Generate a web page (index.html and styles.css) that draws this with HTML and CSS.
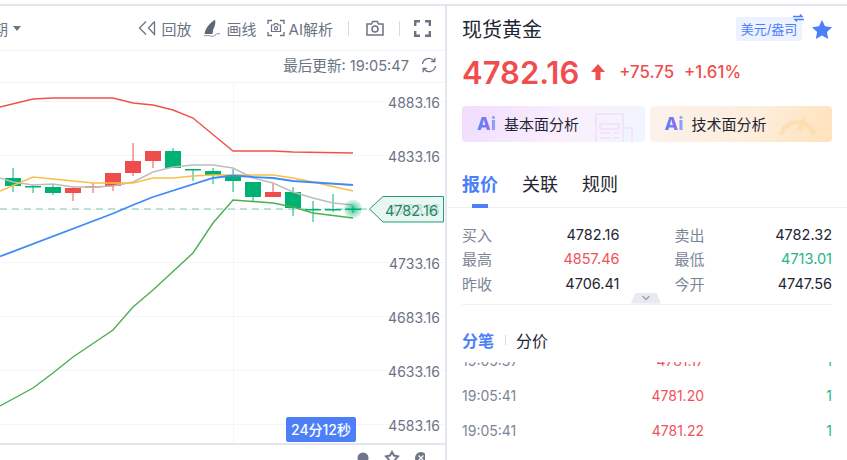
FILE: index.html
```html
<!DOCTYPE html>
<html lang="zh-CN">
<head>
    <meta charset="UTF-8">
    <meta name="viewport" content="width=device-width, initial-scale=1.0">
    <title>现货黄金</title>
    <link rel="stylesheet" href="styles.css">
</head>
<body>
    <div class="page">
        <section class="chart-panel">
            <div class="toolbar">
                <div class="period">期 <span class="caret"></span></div>
                <div class="tools">
                    <div class="tool tool-replay">
                        <svg width="18" height="16" viewBox="0 0 18 16" class="icon"><path d="M8 1.500 1.500 8 8 14.500M16.500 1.500 10.500 8l6 6.500V1.500" fill="none" stroke="#6b7484" stroke-width="1.300"/></svg>
                        回放
                    </div>
                    <div class="tool tool-draw">
                        <svg width="18" height="18" viewBox="0 0 18 18" class="icon"><path d="M12 .5c1 3.500-.2 7-1.800 10L9.500 15H1.500l1-4C4.500 7 8 3 12 .5Z" fill="#5f6879"/><path d="M1 17c3-.6 5-.8 7 .2 2 .5 3.500-.5 5.500-2.200l3.500-.5" fill="none" stroke="#8b93a3" stroke-width="1"/></svg>
                        画线
                    </div>
                    <div class="tool tool-ai">
                        <svg width="18" height="18" viewBox="0 0 18 18" class="icon"><path d="M1 5V1.500h4M13 1.500h4V5M17 13v3.500h-4M5 16.500H1V13" fill="none" stroke="#6b7484" stroke-width="1.400"/><path d="M4.500 6H7l.8-1.300h2.400L11 6h2.500v6.500h-9Z" fill="none" stroke="#6b7484" stroke-width="1.200"/><circle cx="9" cy="9.200" r="1.600" fill="none" stroke="#6b7484" stroke-width="1.200"/></svg>
                        AI解析
                    </div>
                    <span class="tool-sep"></span>
                    <svg class="camera" width="18" height="16" viewBox="0 0 18 16"><path d="M1 4h4.500l1.200-2.500h4.600L12.500 4H17v11H1Z" fill="none" stroke="#6b7484" stroke-width="1.500"/><circle cx="9" cy="9" r="3" fill="none" stroke="#6b7484" stroke-width="1.500"/></svg>
                    <span class="tool-sep"></span>
                    <svg width="17" height="17" viewBox="0 0 17 17"><path d="M1.200 6V1.200H6M11 1.200h4.800V6M15.800 11v4.800H11M6 15.800H1.200V11" fill="none" stroke="#6b7484" stroke-width="2.400"/></svg>
                </div>
            </div>
            <div class="status">
                <span>最后更新: 19:05:47</span>
                <svg width="16" height="16" viewBox="0 0 16 16"><path d="M1.500 7A6.500 6.500 0 0 1 13 3.800M14.500 9A6.500 6.500 0 0 1 3 12.200" fill="none" stroke="#6b7484" stroke-width="1.300"/><path d="M13.800 .8v3.700H10.200M2.200 15.200v-3.700h3.600" fill="none" stroke="#6b7484" stroke-width="1.300"/></svg>
            </div>
            <div class="chart">
                <svg class="chart-svg" width="445" height="360" viewBox="0 83 445 360">
                    <defs>
                        <radialGradient id="glow">
                            <stop offset="0" stop-color="#00b272" stop-opacity=".75"/>
                            <stop offset="1" stop-color="#00b272" stop-opacity=".08"/>
                        </radialGradient>
                    </defs>

                    <g class="grid">
                        <path d="M0 101.500H445M0 155.500H445M0 209.500H445M0 262.500H445M0 316.500H445M0 370.500H445M0 424.500H445M233.500 83V443"/>
                    </g>

                    <line class="last-price" x1="0" y1="209" x2="368" y2="209"/>

                    <g class="wick up">
                        <rect x="72.300" y="187" width="1.500" height="14"/>
                        <rect x="92.300" y="183" width="1.500" height="10"/>
                        <rect x="112.300" y="173" width="1.500" height="18"/>
                        <rect x="132.300" y="143" width="1.500" height="33"/>
                        <rect x="152.300" y="151" width="1.500" height="17"/>
                        <rect x="272.300" y="183" width="1.500" height="14"/>
                    </g>
                    <g class="wick down">
                        <rect x="12.300" y="168" width="1.500" height="24"/>
                        <rect x="32.300" y="185" width="1.500" height="8"/>
                        <rect x="52.300" y="185" width="1.500" height="10"/>
                        <rect x="172.300" y="148" width="1.500" height="20"/>
                        <rect x="192.300" y="169" width="1.500" height="12"/>
                        <rect x="212.300" y="168" width="1.500" height="16"/>
                        <rect x="232.300" y="169" width="1.500" height="23"/>
                        <rect x="252.300" y="182" width="1.500" height="19"/>
                        <rect x="292.300" y="187" width="1.500" height="29"/>
                        <rect x="312.300" y="201" width="1.500" height="21"/>
                        <rect x="332.300" y="194" width="1.500" height="18"/>
                        <rect x="352.300" y="206" width="1.500" height="7"/>
                    </g>
                    <g class="up">
                        <rect x="65" y="188" width="16" height="5"/>
                        <rect x="85" y="186" width="16" height="1.500"/>
                        <rect x="105" y="173" width="16" height="13"/>
                        <rect x="125" y="161" width="16" height="12"/>
                        <rect x="145" y="151" width="16" height="10"/>
                        <rect x="265" y="192" width="16" height="5"/>
                    </g>
                    <g class="down">
                        <rect x="5" y="178" width="16" height="8"/>
                        <rect x="25" y="186" width="16" height="1.500"/>
                        <rect x="45" y="187" width="16" height="6"/>
                        <rect x="165" y="151" width="16" height="17"/>
                        <rect x="185" y="169" width="16" height="1.500"/>
                        <rect x="205" y="171" width="16" height="4"/>
                        <rect x="225" y="175" width="16" height="6"/>
                        <rect x="245" y="182" width="16" height="15"/>
                        <rect x="285" y="192" width="16" height="16"/>
                        <rect x="305" y="209" width="16" height="1.500"/>
                        <rect x="325" y="209" width="16" height="1.500"/>
                        <rect x="345" y="208.500" width="16" height="1.500"/>
                    </g>

                    <polyline class="line line-red" points="0,107 33,99 53,98 113,98 133,103 153,105 173,110 193,118 233,151 273,151 293,152 353,153"/>
                    <polyline class="line line-green" points="0,406 33,388 53,373 73,357 113,330 133,307 153,290 193,253 213,223 233,200 273,203 293,207 313,213 353,218"/>
                    <polyline class="line line-grey" points="0,178 13,182 33,185 53,184 73,187 93,187 113,186 133,182 153,172 173,167 193,165 213,165 233,168 253,178 273,183 293,192 313,198 333,203 353,205"/>
                    <polyline class="line line-yellow" points="0,191 33,177 53,179 73,181 93,183 113,183 133,183 153,178 173,178 193,176 213,175 233,175 273,175 293,178 313,182 353,191"/>
                    <polyline class="line line-blue" points="0,256.500 113,213.500 133,205 153,197 213,178 233,175.500 253,177 273,178 293,181 353,185"/>

                    <circle cx="353" cy="209" r="9.500" fill="url(#glow)"/>

                    <g class="axis">
                        <text x="440" y="108">4883.16</text>
                        <text x="440" y="162">4833.16</text>
                        <text x="440" y="269">4733.16</text>
                        <text x="440" y="323">4683.16</text>
                        <text x="440" y="377">4633.16</text>
                        <text x="440" y="431">4583.16</text>
                    </g>

                    <polygon class="price-tag" points="369.500,209 383,196.500 443.500,196.500 443.500,222 383,222"/>
                    <text class="price-ghost" x="440" y="215">4783.16</text>
                    <text class="price-tag-text" x="385" y="216">4782.16</text>
                </svg>
                <div class="countdown">24分12秒</div>
            </div>
            <div class="chart-foot">
                <svg width="70" height="16" viewBox="0 0 70 16">
                    <circle cx="8" cy="8" r="5.500" fill="#6e7688"/>
                    <path d="M37 2l2 3.500 4 .8-2.700 3 .4 4-3.700-1.700-3.700 1.700.4-4-2.700-3 4-.8Z" fill="none" stroke="#6e7688" stroke-width="2"/>
                    <circle cx="66" cy="8" r="6" fill="#6e7688"/>
                    <path d="M63.500 5.500l5 5M68.500 5.500l-5 5" stroke="#fff" stroke-width="1.200"/>
                </svg>
            </div>
        </section>

        <section class="side-panel">
            <div class="head">
                <h1 class="title">现货黄金</h1>
                <div class="head-right">
                    <div class="currency">
                        美元/盎司
                        <svg class="swap" width="11" height="8" viewBox="0 0 11 8"><path d="M0 2.500h9L7 .5M11 5.500H2l2 2" fill="none" stroke="#4d7ffa" stroke-width="1.400"/></svg>
                    </div>
                    <svg width="20" height="19" viewBox="0 0 20 19"><path d="M10 0l3 6.300 7 .9-5.100 4.800 1.300 6.900L10 15.500 3.800 18.900 5.100 12 0 7.200l7-.9Z" fill="#4b80f8"/></svg>
                </div>
            </div>

            <div class="quote">
                <span class="price">4782.16</span>
                <svg class="arrow" width="14" height="16" viewBox="0 0 14 16"><path d="M7 0l7 8H9.500v8h-5V8H0Z" fill="#f04e4e"/></svg>
                <span class="change">+75.75</span>
                <span class="change">+1.61%</span>
            </div>

            <div class="analysis">
                <div class="analysis-btn basic">
                    <span class="ai-logo">Ai</span>
                    基本面分析
                    <svg class="decor decor-doc" width="38" height="29" viewBox="0 0 38 29"><path d="M1 29V1h27v28M5 11h19v5H5ZM5 20h10M18 20h6M5 25h10M18 25h6M28 15h9v14" fill="none" stroke="#f3d9f5" stroke-width="2"/></svg>
                </div>
                <div class="analysis-btn tech">
                    <span class="ai-logo">Ai</span>
                    技术面分析
                    <svg class="decor decor-gauge" width="39" height="24" viewBox="0 0 39 24"><path d="M3 23a17 17 0 0 1 33 0" fill="none" stroke="#fdd9a6" stroke-width="5"/><path d="M18 18 28 1l-3 19Z" fill="#fdd9a6"/></svg>
                </div>
            </div>

            <div class="tabs">
                <span class="tab active">报价</span>
                <span class="tab">关联</span>
                <span class="tab">规则</span>
            </div>

            <div class="stats">
                <div class="stat"><span class="stat-label">买入</span><span>4782.16</span></div>
                <div class="stat"><span class="stat-label">卖出</span><span>4782.32</span></div>
                <div class="stat"><span class="stat-label">最高</span><span class="red">4857.46</span></div>
                <div class="stat"><span class="stat-label">最低</span><span class="green">4713.01</span></div>
                <div class="stat"><span class="stat-label">昨收</span><span>4706.41</span></div>
                <div class="stat"><span class="stat-label">今开</span><span>4747.56</span></div>
                <div class="collapse">
                    <svg width="10" height="6" viewBox="0 0 10 6"><path d="M1.500 1 5 4.500 8.500 1" fill="none" stroke="#9aa1af" stroke-width="1.300"/></svg>
                </div>
            </div>

            <div class="subtabs">
                <span class="subtab active">分笔</span>
                <span class="subtab-sep"></span>
                <span class="subtab">分价</span>
            </div>

            <div class="ticks">
                <div class="tick-list">
                    <div class="tick"><span class="time">19:05:37</span><span class="red">4781.17</span><span class="green">1</span></div>
                    <div class="tick"><span class="time">19:05:41</span><span class="red">4781.20</span><span class="green">1</span></div>
                    <div class="tick"><span class="time">19:05:41</span><span class="red">4781.22</span><span class="green">1</span></div>
                    <div class="tick"><span class="time">19:05:41</span><span class="red">4781.22</span><span class="green">1</span></div>
                </div>
            </div>
        </section>
    </div>
</body>
</html>
```
FILE: styles.css
```css
* {
    box-sizing: border-box;
}
html, body {
    margin: 0;
    height: 460px;
    overflow: hidden;
    background-color: #fff;
}
body {
    padding-top: 4px;
    font-family: Inter, "Noto Sans CJK SC", sans-serif;
    color: #1f2633;
}
.page {
    display: flex;
    height: 456px;
    border-top: 2px solid #e4e6ef;
}

/* left side, chart */
.chart-panel {
    width: 447px;
    flex: none;
    border-right: 2px solid #e4e6ef;
}
.toolbar {
    display: flex;
    align-items: center;
    justify-content: space-between;
    height: 45px;
    border-bottom: 1px solid #f3f4f7;
    color: #6b7484;
    font-size: 15px;
}
.period {
    display: flex;
    align-items: center;
    gap: 5px;
    margin-left: -7px;
}
.caret {
    width: 0;
    height: 0;
    border-left: 4px solid transparent;
    border-right: 4px solid transparent;
    border-top: 5px solid #6b7484;
}
.tools {
    display: flex;
    align-items: center;
    gap: 14px;
    padding-right: 14px;
}
.tool {
    display: flex;
    align-items: center;
    gap: 6px;
}
.tool-replay {
    margin-right: -3px;
}
.tool-draw {
    margin-right: -4px;
}
.tool-ai {
    gap: 4px;
    margin-right: 1px;
}
.tool-sep {
    width: 1px;
    height: 15px;
    background-color: #d7dae2;
}
.camera {
    margin: 0 1px 0 3px;
}
.status {
    display: flex;
    align-items: center;
    justify-content: flex-end;
    gap: 12px;
    height: 32px;
    padding: 0 8px 4px 0;
    border-bottom: 1px solid #f3f4f7;
    color: #6b7484;
    font-size: 14.600px;
}
.chart {
    position: relative;
    height: 360px;
}
.chart-svg {
    display: block;
}
.grid path {
    fill: none;
    stroke: #f5f5f7;
    stroke-width: 1;
}
.last-price {
    stroke: #a5dcc6;
    stroke-width: 1.500;
    stroke-dasharray: 7 5;
}
.up {
    fill: #ef4d4d;
}
.down {
    fill: #00b272;
}
.wick {
    opacity: .65;
}
.line {
    fill: none;
    stroke-width: 1.400;
}
.line-red {
    stroke: #f0524b;
}
.line-green {
    stroke: #4caf50;
}
.line-grey {
    stroke: #bdbdbd;
}
.line-yellow {
    stroke: #fbbf45;
}
.line-blue {
    stroke: #3f8cf5;
    stroke-width: 1.800;
}
.axis text {
    fill: #6b7484;
    font-size: 14px;
    text-anchor: end;
}
.price-tag {
    fill: #eaf6f1;
    stroke: #1f9e72;
    stroke-width: 1;
}
.price-ghost {
    fill: #c9d6d6;
    font-size: 14px;
    text-anchor: end;
}
.price-tag-text {
    fill: #128a60;
    font-size: 14.500px;
}
.countdown {
    position: absolute;
    left: 286px;
    top: 334px;
    width: 70px;
    height: 25px;
    border-radius: 2px;
    background-color: #4d80f8;
    color: #fff;
    font-size: 14px;
    font-weight: 500;
    line-height: 25px;
    text-align: center;
}
.chart-foot {
    display: flex;
    justify-content: flex-end;
    padding: 5px 20px 0 0;
    border-top: 2px solid #e4e6ef;
}

/* right side, quote */
.side-panel {
    flex: 1;
    min-width: 0;
}
.head {
    display: flex;
    align-items: center;
    justify-content: space-between;
    margin-top: 10px;
    padding: 0 15px;
    height: 26px;
}
.title {
    margin: 0;
    padding-top: 2px;
    font-size: 20px;
    font-weight: 400;
    line-height: 28px;
}
.head-right {
    display: flex;
    align-items: center;
    gap: 10px;
}
.currency {
    position: relative;
    width: 66px;
    height: 24px;
    border-radius: 3px;
    background-color: #ecf2ff;
    color: #4d7ffa;
    font-size: 13px;
    line-height: 24px;
    text-align: center;
}
.swap {
    position: absolute;
    right: -2px;
    top: -3px;
}
.quote {
    display: flex;
    align-items: center;
    margin-top: 9px;
    padding: 0 15px;
    height: 42px;
    color: #f04e4e;
}
.price {
    font-size: 31px;
    font-weight: 600;
}
.arrow {
    margin: 0 14px 0 12px;
}
.change {
    margin-right: 10px;
    font-size: 16.800px;
    font-weight: 500;
}
.analysis {
    display: flex;
    gap: 5px;
    margin-top: 13px;
    padding: 0 15px;
}
.analysis-btn {
    display: flex;
    align-items: center;
    flex: 1;
    height: 36px;
    padding: 0 0 2px 15px;
    border-radius: 4px;
    font-size: 15px;
    overflow: hidden;
}
.basic {
    background: linear-gradient(115deg, #efdcff, #fbeffc 55%, #eef6ff);
}
.tech {
    background: linear-gradient(115deg, #fbf2ec, #fdeedd 55%, #ffe2ba);
}
.ai-logo {
    margin: 2px 8px 0 0;
    background: linear-gradient(90deg, #4d8cf8, #8a6cf5 55%, #8cb4fa);
    -webkit-background-clip: text;
    background-clip: text;
    color: transparent;
    font-size: 18px;
    font-weight: 800;
    line-height: 1;
}
.decor {
    margin-left: auto;
    align-self: flex-end;
    opacity: .6;
}
.decor-doc {
    margin-right: 12px;
    margin-bottom: -2px;
}
.decor-gauge {
    margin-right: 15px;
    margin-bottom: 4px;
}
.tabs {
    display: flex;
    gap: 24px;
    margin-top: 29px;
    padding: 0 15px;
    height: 37px;
    border-bottom: 1px solid #f0f1f5;
}
.tab {
    position: relative;
    font-size: 18px;
    line-height: 28px;
}
.tab.active {
    color: #4b80f8;
    font-weight: 700;
}
.tab.active::after {
    content: "";
    position: absolute;
    left: 10px;
    right: 10px;
    bottom: -1px;
    height: 4px;
    background-color: #4b80f8;
}
.stats {
    position: relative;
    display: grid;
    grid-template-columns: 1fr 1fr;
    grid-auto-rows: 24.500px;
    column-gap: 55px;
    margin: 14px 15px 0;
    padding-bottom: 8px;
    border-bottom: 1px solid #f0f1f5;
    font-size: 14.500px;
}
.stat {
    display: flex;
    align-items: center;
    justify-content: space-between;
}
.stat-label {
    color: #7c8595;
    font-size: 15px;
}
.red {
    color: #f0525a;
}
.green {
    color: #22b785;
}
.collapse {
    position: absolute;
    left: 169px;
    bottom: 0;
    display: flex;
    justify-content: center;
    padding-top: 2px;
    width: 30px;
    height: 11px;
    background-color: #e8eaf0;
    clip-path: polygon(15% 0, 85% 0, 100% 100%, 0 100%);
}
.subtabs {
    display: flex;
    align-items: center;
    gap: 11px;
    margin-top: 23px;
    padding: 0 15px;
    height: 24px;
    font-size: 16px;
}
.subtab.active {
    color: #4b80f8;
    font-weight: 700;
}
.subtab-sep {
    width: 1px;
    height: 10px;
    margin-right: -1px;
    background-color: #d7dae2;
}
.ticks {
    height: 98px;
    margin-top: 10.500px;
    overflow: hidden;
}
.tick-list {
    margin-top: -19px;
    padding: 0 15px;
}
.tick {
    display: grid;
    grid-template-columns: 120px 122px 1fr;
    align-items: center;
    height: 35px;
    font-size: 14px;
}
.tick span:nth-child(2),
.tick span:nth-child(3) {
    text-align: right;
}
.time {
    color: #7c8595;
}
```
